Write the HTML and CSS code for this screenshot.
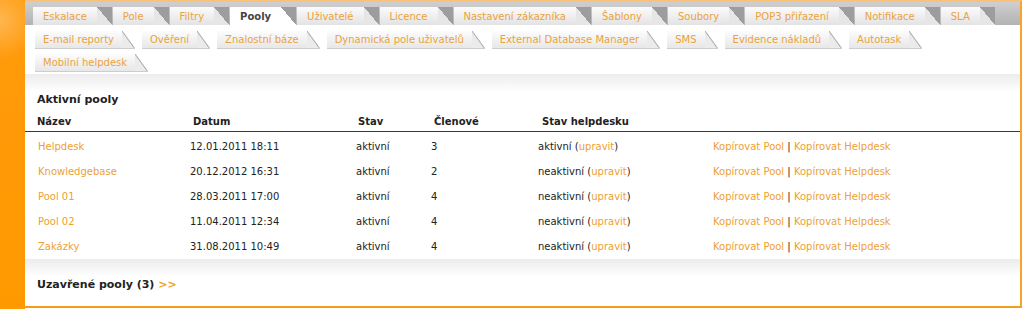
FILE: index.html
```html
<!DOCTYPE html>
<html lang="cs">
<head>
  <meta charset="UTF-8" />
  <title>Pooly</title>
  <link rel="stylesheet" href="styles.css">
</head>
<body>
  <div class="page">
    <!-- Orange side strip -->
    <div class="side"></div>

    <div class="main">
      <!-- Main tabs -->
      <ul class="tabs tabs-main">
        <li><a href="#">Eskalace</a></li>
        <li><a href="#">Pole</a></li>
        <li><a href="#">Filtry</a></li>
        <li class="active"><a href="#">Pooly</a></li>
        <li><a href="#">Uživatelé</a></li>
        <li><a href="#">Licence</a></li>
        <li><a href="#">Nastavení zákazníka</a></li>
        <li><a href="#">Šablony</a></li>
        <li><a href="#">Soubory</a></li>
        <li><a href="#">POP3 přiřazení</a></li>
        <li><a href="#">Notifikace</a></li>
        <li><a href="#">SLA</a></li>
      </ul>

      <!-- Sub tabs -->
      <ul class="tabs tabs-sub">
        <li><a href="#">E-mail reporty</a></li>
        <li><a href="#">Ověření</a></li>
        <li><a href="#">Znalostní báze</a></li>
        <li><a href="#">Dynamická pole uživatelů</a></li>
        <li><a href="#">External Database Manager</a></li>
        <li><a href="#">SMS</a></li>
        <li><a href="#">Evidence nákladů</a></li>
        <li><a href="#">Autotask</a></li>
        <li><a href="#">Mobilní helpdesk</a></li>
      </ul>

      <div class="fade"></div>

      <h2 class="section-title">Aktivní pooly</h2>
      <table class="pools">
        <thead>
          <tr>
            <th>Název</th>
            <th>Datum</th>
            <th>Stav</th>
            <th>Členové</th>
            <th>Stav helpdesku</th>
            <th></th>
          </tr>
        </thead>
        <tbody>
          <tr>
            <td><a href="#">Helpdesk</a></td>
            <td>12.01.2011 18:11</td>
            <td>aktivní</td>
            <td>3</td>
            <td>aktivní (<a href="#">upravit</a>)</td>
            <td><a href="#">Kopírovat Pool</a> | <a href="#">Kopírovat Helpdesk</a></td>
          </tr>
          <tr>
            <td><a href="#">Knowledgebase</a></td>
            <td>20.12.2012 16:31</td>
            <td>aktivní</td>
            <td>2</td>
            <td>neaktivní (<a href="#">upravit</a>)</td>
            <td><a href="#">Kopírovat Pool</a> | <a href="#">Kopírovat Helpdesk</a></td>
          </tr>
          <tr>
            <td><a href="#">Pool 01</a></td>
            <td>28.03.2011 17:00</td>
            <td>aktivní</td>
            <td>4</td>
            <td>neaktivní (<a href="#">upravit</a>)</td>
            <td><a href="#">Kopírovat Pool</a> | <a href="#">Kopírovat Helpdesk</a></td>
          </tr>
          <tr>
            <td><a href="#">Pool 02</a></td>
            <td>11.04.2011 12:34</td>
            <td>aktivní</td>
            <td>4</td>
            <td>neaktivní (<a href="#">upravit</a>)</td>
            <td><a href="#">Kopírovat Pool</a> | <a href="#">Kopírovat Helpdesk</a></td>
          </tr>
          <tr>
            <td><a href="#">Zakázky</a></td>
            <td>31.08.2011 10:49</td>
            <td>aktivní</td>
            <td>4</td>
            <td>neaktivní (<a href="#">upravit</a>)</td>
            <td><a href="#">Kopírovat Pool</a> | <a href="#">Kopírovat Helpdesk</a></td>
          </tr>
        </tbody>
      </table>

      <div class="fade"></div>

      <h2 class="section-title closed">Uzavřené pooly (3) <a href="#">&gt;&gt;</a></h2>
    </div>
  </div>
</body>
</html>
```

FILE: styles.css
```css
/* Reset */
* {
  margin: 0;
  padding: 0;
  box-sizing: border-box;
}
body {
  font-family: 'DejaVu Sans', Verdana, sans-serif;
  font-size: 10px;
  color: #222;
  background: #fff;
}
a {
  color: #eea033;
  text-decoration: none;
}

.page {
  display: flex;
  height: 309px;
}

/* Orange strip on the left */
.side {
  width: 25px;
  flex-shrink: 0;
  background: radial-gradient(circle at 0 20px, #ffb650 0, #ff9a0a 40px, #ff9900 100%);
}

.main {
  flex: 1;
  margin-right: 1px;
  border-top: 2px solid #f9c27c;
  border-right: 2px solid #f7a52a;
  border-bottom: 2px solid #f59c1c;
  height: 308px;
  display: flex;
  flex-direction: column;
}

/* Tabs */
.tabs {
  list-style: none;
  display: flex;
  flex-wrap: wrap;
}
.tabs li {
  height: 18px;
  line-height: 18px;
}
.tabs a {
  display: block;
  color: #eba23c;
}

.tabs-main {
  height: 23px;
  padding: 5px 0 0 8px;
  gap: 1px;
  background: linear-gradient(#cfcfcf, #b3b3b3);
}
.tabs-main a {
  padding-top: 1px;
}
.tabs-main li {
  padding: 0 25px 0 10px;
  background:
    linear-gradient(to top right, #e6e6e6 50%, #9d9d9d 50%) right top / 15px 100% no-repeat,
    linear-gradient(#fbfbfb, #e3e3e3) left top / calc(100% - 15px) 100% no-repeat;
}
.tabs-main li.active {
  background:
    linear-gradient(to top right, #fff 50%, #9d9d9d 50%) right top / 15px 100% no-repeat,
    #fff left top / calc(100% - 15px) 100% no-repeat;
}
.tabs-main li.active a {
  color: #444;
  font-weight: bold;
}

.tabs-sub {
  padding: 6px 0 0 10px;
  row-gap: 5px;
}
.tabs-sub li {
  margin-right: 7px;
  padding: 0 21px 0 8px;
  background:
    linear-gradient(to top right, transparent calc(50% - 1px), #a8a8a8 50%, transparent calc(50% + 1px)) right top / 13px 100% no-repeat,
    linear-gradient(to top right, #ebebeb calc(50% - 1px), transparent 50%) right top / 13px 100% no-repeat,
    linear-gradient(#fcfcfc, #e6e6e6) left top / calc(100% - 13px) 100% no-repeat;
  box-shadow: inset 0 -1px 0 #cdcdcd;
}

/* Soft grey bands */
.fade {
  height: 18px;
  margin-top: 2px;
  background: linear-gradient(#ececec, #fff);
}

.section-title {
  font-size: 11px;
  line-height: 16px;
  padding-left: 12px;
  color: #222;
}
.section-title a {
  color: #f5a11c;
}

/* Pool table */
.pools {
  width: 100%;
  border-collapse: collapse;
}
.pools th {
  text-align: left;
  line-height: 14px;
  padding: 7px 0 2px;
  border-bottom: 1px solid #3a3a3a;
  font-weight: bold;
}
.pools td {
  line-height: 14px;
  padding: 8px 0 3px;
  white-space: nowrap;
}
.pools th:nth-child(1) { width: 165px; padding-left: 12px; }
.pools td:nth-child(1) { padding-left: 13px; }
.pools th:nth-child(2) { width: 166px; padding-left: 3px; }
.pools th:nth-child(3) { width: 75px; padding-left: 2px; }
.pools th:nth-child(4) { width: 107px; padding-left: 3px; }
.pools th:nth-child(5) { width: 175px; padding-left: 4px; }
```
